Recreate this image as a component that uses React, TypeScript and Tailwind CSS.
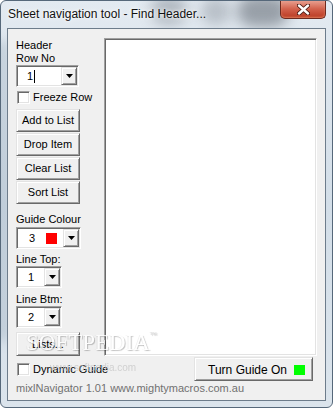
import React from 'react'

// classic win32 3D edges
const raised =
  'border border-t-[#e3e3e3] border-l-[#e3e3e3] border-r-[#696969] border-b-[#696969] shadow-[inset_1px_1px_0_#ffffff,inset_-1px_-1px_0_#a0a0a0]'
const sunken =
  'border border-t-[#a0a0a0] border-l-[#a0a0a0] border-r-white border-b-white shadow-[inset_1px_1px_0_#696969,inset_-1px_-1px_0_#e3e3e3]'

function DropButton() {
  return (
    <div className={`flex w-[16px] h-full items-center justify-center bg-[#f0f0f0] ${raised}`}>
      <svg width="7" height="4" viewBox="0 0 7 4">
        <path d="M0 0h7L3.5 4z" fill="#000" />
      </svg>
    </div>
  )
}

function Combo({ className, children }: { className: string; children: React.ReactNode }) {
  return (
    <div className={`flex h-[22px] bg-white p-[1px] ${sunken} ${className}`}>
      <div className="flex flex-1 items-center">{children}</div>
      <DropButton />
    </div>
  )
}

function Check({ label }: { label: string }) {
  return (
    <div className="flex items-center gap-[3px] ml-[1px]">
      <div className={`w-[13px] h-[13px] bg-white ${sunken}`} />
      <span className="leading-[13px]">{label}</span>
    </div>
  )
}

function Button({ label, className }: { label: string; className: string }) {
  return (
    <button className={`flex items-center justify-center bg-[#f0f0f0] leading-[13px] ${raised} ${className}`}>
      {label}
    </button>
  )
}

export default function App() {
  return (
    <div className="w-[333px] h-[408px] bg-white">
      <div className="relative w-full h-full overflow-hidden rounded-[6px] border border-[#56687a] bg-gradient-to-b from-[#e3eaf1] via-[#d3dee8] to-[#dbe4ec] font-['Liberation_Sans',Arial,sans-serif] text-[11px] text-black">
        {/* blurred glass behind the frame */}
        <div className="absolute left-[150px] top-[-6px] h-[30px] w-[36px] rounded-full bg-[#6a727c] blur-[7px] opacity-40" />
        <div className="absolute left-[200px] top-[-4px] h-[28px] w-[30px] rounded-full bg-[#6a727c] blur-[7px] opacity-35" />
        <div className="absolute left-[236px] top-[-6px] h-[32px] w-[52px] rounded-full bg-[#4f5761] blur-[7px] opacity-50" />
        <div className="absolute left-[-10px] top-[40px] w-[20px] h-[300px] bg-[#9fb0c0] blur-[6px] opacity-40" />

        {/* title bar */}
        <div className="relative flex h-[27px]">
          <div className="pl-[7px] pt-[5px] text-[12px] leading-[16px] text-[#111] [text-shadow:0_0_6px_#fff,0_0_3px_#fff]">
            Sheet navigation tool - Find Header...
          </div>
          <div className="ml-auto mr-[6px] mt-[-1px] flex h-[19px] w-[46px] items-center justify-center rounded-b-[5px] border border-t-0 border-[#6e2a1f] bg-gradient-to-b from-[#e9a596] via-[#d2614c] to-[#b8371f] shadow-[inset_0_1px_0_rgba(255,255,255,0.45),inset_0_-1px_2px_rgba(255,190,150,0.5)]">
            <svg width="13" height="11" viewBox="0 0 13 11">
              <path d="M2 1.5l9 8M11 1.5l-9 8" stroke="#4a1a12" strokeWidth="4.2" strokeLinecap="round" />
              <path d="M2 1.5l9 8M11 1.5l-9 8" stroke="#fff" strokeWidth="2.4" strokeLinecap="round" />
            </svg>
          </div>
        </div>

        {/* client area */}
        <div className="relative ml-[6px] flex h-[373px] w-[319px] flex-col border border-[#6d7c8b] bg-[#f0f0f0] pl-2 pt-[9px]">
          <div className="flex">
            {/* left controls */}
            <div className="flex w-[88px] flex-col">
              <div className="mt-[1px] leading-[13px]">
                Header
                <br />
                Row No
              </div>
              <Combo className="w-[63px]">
                <span className="pl-[9px] leading-[13px]">1</span>
                <span className="ml-[1px] h-[13px] w-[1px] bg-black" />
              </Combo>
              <div className="mt-[4px]">
                <Check label="Freeze Row" />
              </div>
              <div className="mt-[5px] flex flex-col gap-[1px]">
                <Button label="Add to List" className="h-[23px] w-[64px]" />
                <Button label="Drop Item" className="h-[23px] w-[64px]" />
                <Button label="Clear List" className="h-[23px] w-[64px]" />
                <Button label="Sort List" className="h-[23px] w-[64px]" />
              </div>
              <div className="mt-[9px] leading-[13px]">Guide Colour</div>
              <Combo className="mt-[1px] w-[65px]">
                <span className="pl-[11px] leading-[13px]">3</span>
                <span className="ml-[11px] h-[11px] w-[11px] bg-[#ff0000]" />
              </Combo>
              <div className="mt-[4px] leading-[13px]">Line Top:</div>
              <Combo className="w-[46px]">
                <span className="pl-[10px] leading-[13px]">1</span>
              </Combo>
              <div className="mt-[5px] leading-[13px]">Line Btm:</div>
              <Combo className="w-[46px]">
                <span className="pl-[10px] leading-[13px]">2</span>
              </Combo>
              <Button label="Lists..." className="mt-[4px] h-[24px] w-[64px]" />
            </div>

            {/* list box */}
            <div className={`h-[318px] w-[213px] bg-white ${sunken}`} />
          </div>

          {/* bottom row */}
          <div className="mt-[1px] flex items-start">
            <div className="mt-[6px]">
              <Check label="Dynamic Guide" />
            </div>
            <div
              className={`ml-auto mr-[12px] flex h-[24px] w-[119px] items-center justify-end gap-[7px] bg-[#f0f0f0] pr-[7px] pt-[1px] text-[12px] leading-[14px] ${raised}`}
            >
              <span>Turn Guide On</span>
              <span className="h-[10px] w-[11px] bg-[#00ff00]" />
            </div>
          </div>
          <div className="mt-[1px] leading-[13px] text-[#707070]">mixlNavigator 1.01 www.mightymacros.com.au</div>

          {/* watermark overlay */}
          <div className="pointer-events-none absolute left-[18px] top-[302px] font-['Liberation_Serif',serif] text-[23px] leading-[24px] text-white opacity-80 [text-shadow:1px_1px_1px_rgba(0,0,0,0.3),-1px_0_0_rgba(0,0,0,0.08)]">
            SOFTPEDIA
            <span className="align-top text-[7px] leading-[8px] text-[#cfcfcf]">™</span>
          </div>
          <div className="pointer-events-none absolute left-[42px] top-[333px] text-[10px] leading-[12px] text-[#c4c4c4] opacity-70">
            www.softpedia.com
          </div>
        </div>
      </div>
    </div>
  )
}
